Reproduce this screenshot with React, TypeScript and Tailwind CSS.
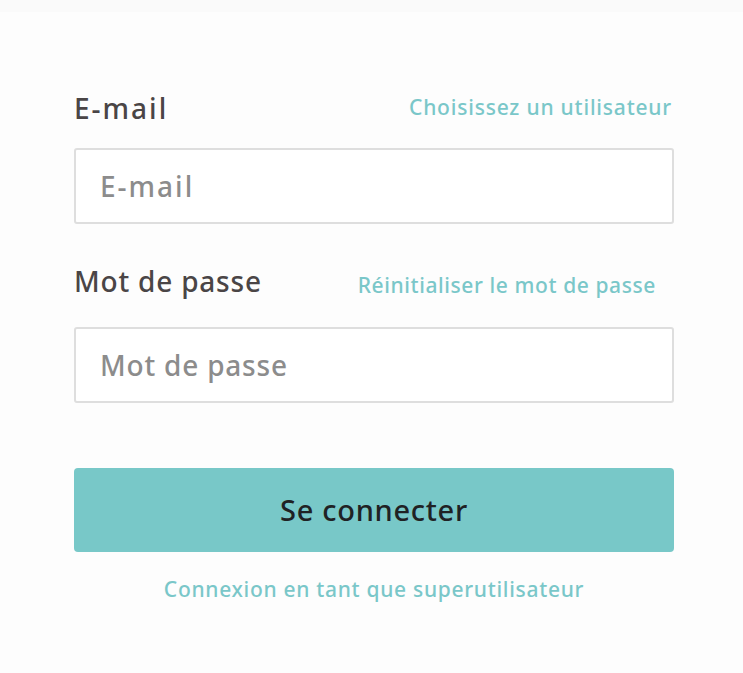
export default function App() {
  return (
    <div className="min-h-[673px] w-full bg-[#fdfdfd] border-t-[12px] border-[#fafafa] font-['Noto_Sans',sans-serif]">
      <div className="mx-[74px] w-[600px] pt-[76px]">
        <div className="flex items-center justify-between">
          <span className="text-[28px] font-medium leading-[40px] tracking-[2px] text-[#4a4546]">E-mail</span>
          <a className="text-[21px] font-medium tracking-[0.8px] text-[#7ac7c9] mr-[2px]">Choisissez un utilisateur</a>
        </div>
        <input
          type="text"
          placeholder="E-mail"
          className="mt-[20px] h-[76px] w-full rounded-[3px] border-2 border-[#dedede] bg-white px-[24px] text-[28px] font-medium tracking-[2px] placeholder:text-[#8c8c8c] outline-none"
        />
        <div className="mt-[40px] flex items-center justify-between">
          <span className="text-[28px] font-medium leading-[40px] tracking-[0.8px] text-[#4a4546] -mt-[4px]">Mot de passe</span>
          <a className="text-[21px] font-medium tracking-[0.6px] text-[#7ac7c9] mr-[18px] mt-[6px]">Réinitialiser le mot de passe</a>
        </div>
        <input
          type="password"
          placeholder="Mot de passe"
          className="mt-[25px] h-[76px] w-full rounded-[3px] border-2 border-[#dedede] bg-white px-[24px] text-[28px] font-medium tracking-[0.8px] placeholder:text-[#8c8c8c] outline-none"
        />
        <button className="mt-[65px] h-[84px] w-full rounded-[4px] bg-[#78c8c8] text-[29px] font-medium tracking-[0.7px] text-[#1f2224]">
          Se connecter
        </button>
        <div className="mt-[22px] text-center">
          <a className="text-[21px] font-medium tracking-[0.7px] text-[#7ac7c9]">Connexion en tant que superutilisateur</a>
        </div>
      </div>
    </div>
  );
}
